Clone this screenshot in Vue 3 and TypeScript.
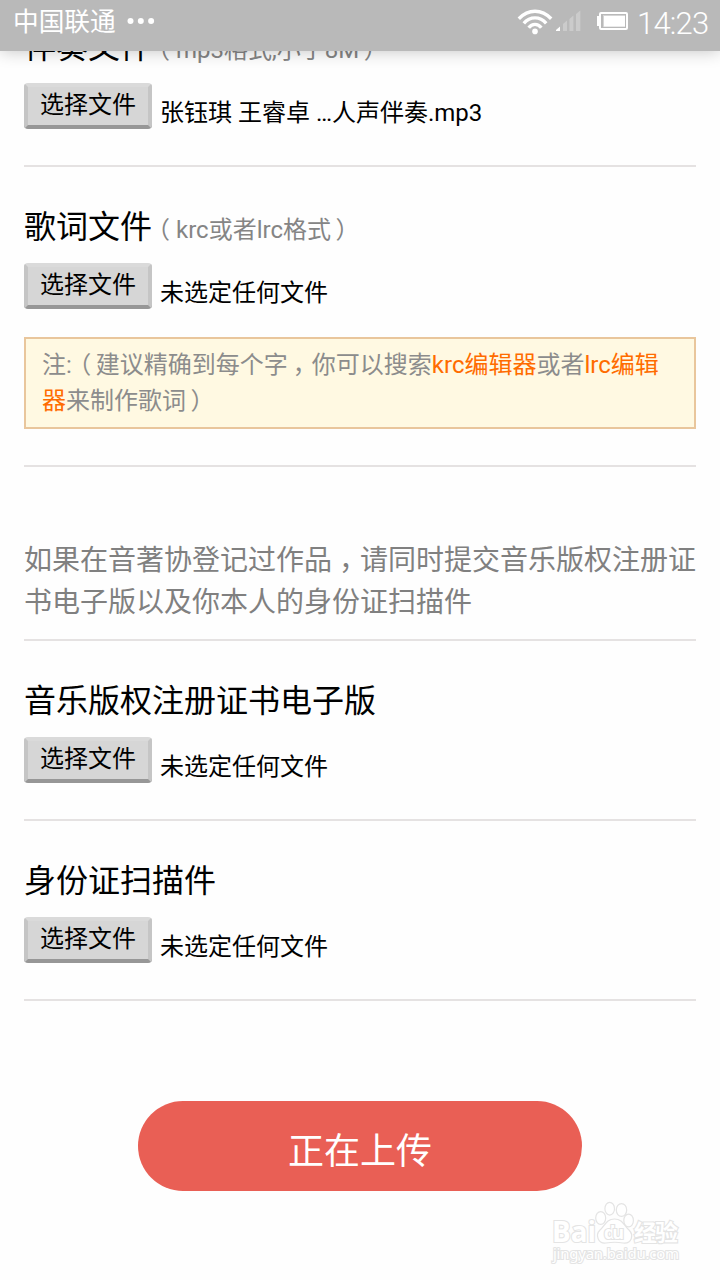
<script setup lang="ts">
interface Upload {
  title: string
  formats?: string
  required?: boolean
  file: string
  note?: boolean
}

const before: Upload[] = [
  { title: '伴奏文件', formats: 'mp3格式,小于8M', required: true, file: '张钰琪 王睿卓 …人声伴奏.mp3' },
  { title: '歌词文件', formats: 'krc或者lrc格式', file: '未选定任何文件', note: true },
]
const after: Upload[] = [
  { title: '音乐版权注册证书电子版', file: '未选定任何文件' },
  { title: '身份证扫描件', file: '未选定任何文件' },
]
</script>

<template>
  <div class="screen">
    <header class="status">
      <span class="carrier">中国联通</span>
      <svg class="dots" width="28" height="8" viewBox="0 0 28 8">
        <circle cx="3.5" cy="4" r="3" /><circle cx="13.8" cy="4" r="3" /><circle cx="24.1" cy="4" r="3" />
      </svg>
      <svg class="signals" width="112" height="30" viewBox="517 8 112 30">
        <g fill="none" stroke="#fff" stroke-width="3.4">
          <path d="M518.8 19.7Q526 12.2 535 12.2T551.2 19.7" />
          <path d="M523.8 24.3Q528.5 18.9 535 18.9T546.2 24.3" />
          <path d="M528.7 28.7Q531.3 25.4 535 25.4T541.3 28.7" />
        </g>
        <circle cx="535" cy="32.4" r="2.8" fill="#fff" />
        <path d="M556 32v-1l4-3.5V32z" fill="#fff" />
        <path d="M563 32v-7l4-3.5V32zM569.4 32V20l4-3.5V32zM576 32V15l4.3-3.5V32z" fill="#cbcbcb" />
        <rect x="600" y="14" width="27" height="16" rx="1" fill="none" stroke="#fff" stroke-width="2" />
        <path d="M600 17h-3v10h3z" fill="#fff" />
        <rect x="603" y="16" width="22" height="12" fill="#d5d5d5" />
        <rect x="604" y="17" width="21" height="10.5" fill="#fff" />
      </svg>
      <span class="clock">14:23</span>
    </header>

    <main class="form">
      <section v-for="item in before" :key="item.title" class="field">
        <h2 class="title">{{ item.title }}<small v-if="item.formats" class="formats"><span class="mark">（</span>{{ item.formats }}<span class="mark close">）</span></small><i v-if="item.required" class="required">*</i></h2>
        <div class="picker">
          <button class="choose" type="button">选择文件</button>
          <span class="file">{{ item.file }}</span>
        </div>
        <p v-if="item.note" class="note">注:<span class="mark open">（</span>建议精确到每个字<span class="mark comma">，</span>你可以搜索<a>krc编辑器</a>或者<a>lrc编辑器</a>来制作歌词<span class="mark close">）</span></p>
      </section>

      <p class="intro">如果在音著协登记过作品<span class="mark">，</span>请同时提交音乐版权注册证<br>书电子版以及你本人的身份证扫描件</p>

      <section v-for="item in after" :key="item.title" class="field">
        <h2 class="title">{{ item.title }}</h2>
        <div class="picker">
          <button class="choose" type="button">选择文件</button>
          <span class="file">{{ item.file }}</span>
        </div>
      </section>

      <button class="submit" type="button">正在上传</button>
    </main>

    <svg class="watermark" width="140" height="70" viewBox="545 1198 140 70">
      <g fill="#fff" stroke="#e4e4e4" stroke-width="1.2">
        <g class="brand">
          <text x="552" y="1242" font-size="29" textLength="44" lengthAdjust="spacingAndGlyphs">Bai</text>
          <text x="634" y="1241" font-size="23" textLength="44">经验</text>
        </g>
        <ellipse cx="600.7" cy="1218" rx="5" ry="6.4" />
        <ellipse cx="609.7" cy="1208.7" rx="4.8" ry="6.4" />
        <ellipse cx="621.5" cy="1210" rx="5.2" ry="6.4" />
        <ellipse cx="628.6" cy="1220.5" rx="4.8" ry="6.4" />
        <path d="M614.5 1219C606 1219 605 1226 600 1230C595 1235 598 1244 606 1243Q615 1241.5 623 1243C632 1244 634 1235 629 1230C624 1226 623 1219 614.5 1219Z" />
        <text class="brand" x="604" y="1239" font-size="18" textLength="20">du</text>
        <text class="url" x="553" y="1259" font-size="15" textLength="126">jingyan.baidu.com</text>
      </g>
    </svg>
  </div>
</template>

<style>
body {
  margin: 0;
}
</style>

<style scoped>
.screen {
  position: relative;
  width: 720px;
  height: 1280px;
  overflow: hidden;
  background: #fefefe;
  color: #000;
  font-family: Roboto, "Noto Sans CJK SC", sans-serif;
  font-size: 24px;
}
.status {
  position: absolute;
  z-index: 1;
  top: 0;
  left: 0;
  box-sizing: border-box;
  display: flex;
  align-items: center;
  width: 720px;
  height: 51px;
  padding: 0 11px 7px 13px;
  background: #b9b9b9;
  box-shadow: 0 0 16px rgba(0, 0, 0, 0.24);
  color: #fff;
}
.carrier {
  font-size: 25.7px;
  line-height: 42px;
}
.dots {
  margin: -2px 0 0 11px;
  fill: #fff;
}
.signals {
  margin-left: auto;
}
.clock {
  width: 72px;
  padding-top: 2px;
  margin-left: 8px;
  font-size: 31px;
  font-weight: 300;
  letter-spacing: -0.8px;
  white-space: nowrap;
}
.form {
  display: flow-root;
  padding: 0 24px;
  margin-top: -13px;
}
.field {
  box-sizing: border-box;
  min-height: 180px;
  padding: 37px 0 36px;
  border-bottom: 2px solid #e5e2e2;
}
.title {
  height: 46px;
  margin: 0 0 13px;
  font-size: 32px;
  font-weight: 400;
  line-height: 46px;
  white-space: nowrap;
}
.formats {
  color: #858585;
  font-size: 24px;
}
.required {
  margin-left: 4px;
  color: #ff6c00;
  font-size: 24px;
  font-style: normal;
}
.mark {
  display: inline-block;
  width: 1em;
  text-align: center;
  text-indent: 0;
  font-feature-settings: "halt";
}
.open {
  text-indent: 3px;
}
.comma {
  text-indent: -2px;
}
.close {
  text-indent: -3px;
}
.picker {
  display: flex;
  height: 46px;
  gap: 8px;
}
.choose {
  box-sizing: border-box;
  width: 128px;
  height: 46px;
  padding: 0 0 2px;
  border: 4px solid;
  border-color: #dadada #c5c5c5 #979797 #c5c5c5;
  border-radius: 4px;
  background: #d6d6d6;
  color: #000;
  font: inherit;
  line-height: 36px;
}
.file {
  padding-top: 12px;
  line-height: 36px;
  white-space: nowrap;
}
.note {
  box-sizing: border-box;
  height: 92px;
  margin: 28px 0 0;
  padding: 8px 16px;
  border: 2px solid #e9c69c;
  background: #fff9e2;
  color: #8c8c8c;
  line-height: 36px;
}
.note a {
  color: #ff6c00;
}
.intro {
  box-sizing: border-box;
  height: 174px;
  margin: 0;
  padding-top: 73px;
  border-bottom: 2px solid #e5e2e2;
  color: #808080;
  font-size: 28px;
  line-height: 42px;
  white-space: nowrap;
}
.submit {
  display: block;
  width: 444px;
  height: 90px;
  margin: 100px auto 0;
  padding: 4px 0 0;
  border: 0;
  border-radius: 45px;
  background: #e95f55;
  color: #fff;
  font: inherit;
  font-size: 36px;
}
.watermark {
  position: absolute;
  left: 545px;
  top: 1198px;
}
.watermark text {
  paint-order: stroke;
  stroke-width: 2.2px;
}
.brand {
  font-family: "Open Sans", "Noto Sans CJK SC", sans-serif;
  font-weight: 700;
}
.url {
  font-family: "Noto Sans", sans-serif;
}
</style>
